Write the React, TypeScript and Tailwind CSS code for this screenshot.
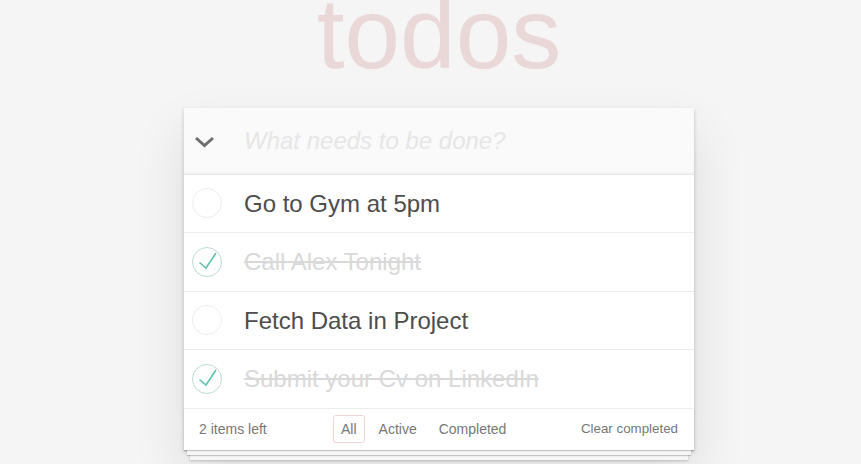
import { useState } from "react";

type Todo = { id: number; title: string; done: boolean };

const INITIAL: Todo[] = [
  { id: 1, title: "Go to Gym at 5pm", done: false },
  { id: 2, title: "Call Alex Tonight", done: true },
  { id: 3, title: "Fetch Data in Project", done: false },
  { id: 4, title: "Submit your Cv on LinkedIn", done: true },
];

function Toggle({ done }: { done: boolean }) {
  return (
    <svg width="32" height="32" viewBox="0 0 32 32" className="shrink-0">
      <circle cx="16" cy="16" r="14.5" fill="none" stroke={done ? "#bddad5" : "#ededed"} strokeWidth="1" />
      {done ? (
        <path d="M8.5 20.5 L15 26 L25 11" fill="none" stroke="#5dc2af" strokeWidth="1.6" transform="translate(0,-4)" />
      ) : null}
    </svg>
  );
}

export default function App() {
  const [todos] = useState<Todo[]>(INITIAL);
  const left = todos.filter((todo) => !todo.done).length;

  return (
    <div className="min-h-screen overflow-hidden bg-[#f5f5f5] font-['Liberation_Sans',Arial,sans-serif] text-[#4d4d4d]">
      <div className="ml-[184px] w-[510px]">
        <h1 className="-mt-[17px] mb-[25px] text-center text-[100px] leading-[100px] text-[rgba(175,47,47,0.15)]">
          todos
        </h1>

        <section className="bg-white shadow-[0_2px_4px_0_rgba(0,0,0,0.2),0_25px_50px_0_rgba(0,0,0,0.1)]">
          <header className="flex h-[65.5px] items-center bg-[#fafafa] shadow-[inset_0_-2px_1px_rgba(0,0,0,0.03)]">
            <div className="flex w-[60px] shrink-0 justify-start pl-[10px] pt-[2px]">
              <svg width="21" height="12" viewBox="0 0 21 12">
                <path d="M2 2 L10.5 9.5 L19 2" fill="none" stroke="#6d6d6d" strokeWidth="3" />
              </svg>
            </div>
            <input
              placeholder="What needs to be done?"
              className="min-w-0 flex-1 bg-transparent pr-4 text-[24px] italic leading-[33px] outline-none placeholder:text-[#e6e6e6]"
            />
          </header>

          <ul className="border-t border-[#e6e6e6]">
            {todos.map((todo) => (
              <li key={todo.id} className="flex items-center border-b border-[#ededed]">
                <div className="flex w-[60px] shrink-0 justify-start pl-[7px]">
                  <Toggle done={todo.done} />
                </div>
                <label
                  className={
                    todo.done
                      ? "py-[15px] text-[24px] leading-[27.5px] text-[#d9d9d9] line-through"
                      : "py-[15px] text-[24px] leading-[27.5px] text-[#4d4d4d]"
                  }
                >
                  {todo.title}
                </label>
              </li>
            ))}
          </ul>

          <footer className="flex h-[41px] items-center px-[15px] text-[14px] text-[#777] shadow-[0_1px_1px_rgba(0,0,0,0.2),0_8px_0_-3px_#f6f6f6,0_9px_1px_-3px_rgba(0,0,0,0.2),0_16px_0_-6px_#f6f6f6,0_17px_2px_-6px_rgba(0,0,0,0.2)]">
            <span className="w-[134px]">{left} items left</span>
            <ul className="flex gap-[6px] leading-[20px]">
              <li className="rounded-[3px] border border-[rgba(175,47,47,0.2)] px-[7px] py-[3px]">All</li>
              <li className="rounded-[3px] border border-transparent px-[7px] py-[3px]">Active</li>
              <li className="rounded-[3px] border border-transparent px-[7px] py-[3px]">Completed</li>
            </ul>
            <button className="ml-auto pr-[1px] text-[13.333px] leading-[20px] text-[#777]">Clear completed</button>
          </footer>
        </section>
      </div>
    </div>
  );
}
